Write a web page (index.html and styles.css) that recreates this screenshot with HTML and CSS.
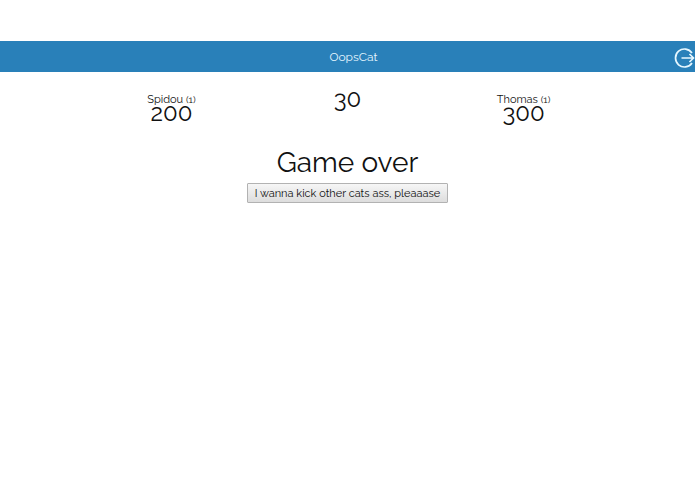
FILE: index.html
```html
<!DOCTYPE html>
<html lang="en">
<head>
  <meta charset="UTF-8">
  <meta name="viewport" content="width=device-width, initial-scale=1.0">
  <title>OopsCat</title>
  <link rel="stylesheet" href="styles.css">
</head>
<body>
  <header class="navbar">
    <h1 class="title">OopsCat</h1>
    <a class="logout" href="#logout" aria-label="Log out">
      <svg width="21" height="20" viewBox="0 0 21 20" fill="none" stroke="#e6f7ff" stroke-width="1.7">
        <path d="M18 5A9 9 0 1 0 18 15"/>
        <path d="M7.5 10H19.5M15.5 6L19.5 10L15.5 14"/>
      </svg>
    </a>
  </header>

  <main>
    <section class="scores">
      <div class="player">
        <div class="name">Spidou <small>(1)</small></div>
        <div class="score">200</div>
      </div>
      <div class="timer">30</div>
      <div class="player">
        <div class="name">Thomas <small>(1)</small></div>
        <div class="score">300</div>
      </div>
    </section>

    <section class="game-over">
      <h2>Game over</h2>
      <button type="button">I wanna kick other cats ass, pleaaase</button>
    </section>
  </main>
</body>
</html>
```
FILE: styles.css
```css
body {
  margin: 0;
  padding-top: 41px;
  background-color: #fff;
  color: #111;
  font-family: Raleway, Lato, sans-serif;
  font-size: 11px;
}
.navbar {
  display: grid;
  grid-template-columns: 1fr auto 1fr;
  align-items: center;
  height: 31px;
  padding-left: 12px;
  background-color: #2980b9;
  color: #e6f7ff;
}
.title {
  grid-column: 2;
  margin: 0;
  font-size: 12px;
  font-weight: normal;
}
.logout {
  justify-self: end;
  display: flex;
  padding-top: 3px;
}
.scores {
  display: grid;
  grid-template-columns: 1fr 1fr 1fr;
  width: 76%;
  margin: 0 auto;
  padding-top: 21px;
  text-align: center;
}
.name {
  line-height: 14px;
}
.name small {
  font-size: 10px;
}
.score, .timer {
  font-size: 24px;
  line-height: 12px;
}
.game-over {
  padding-top: 28px;
  text-align: center;
}
h2 {
  margin: 0 0 4px;
  font-size: 28px;
  line-height: 32px;
  font-weight: normal;
}
button {
  height: 20px;
  padding: 0 7px;
  border: 1px solid #b2b2b2;
  border-radius: 1px;
  background: linear-gradient(#f6f6f6, #dddddd);
  color: #111;
  font-family: inherit;
  font-size: 11px;
}
```
